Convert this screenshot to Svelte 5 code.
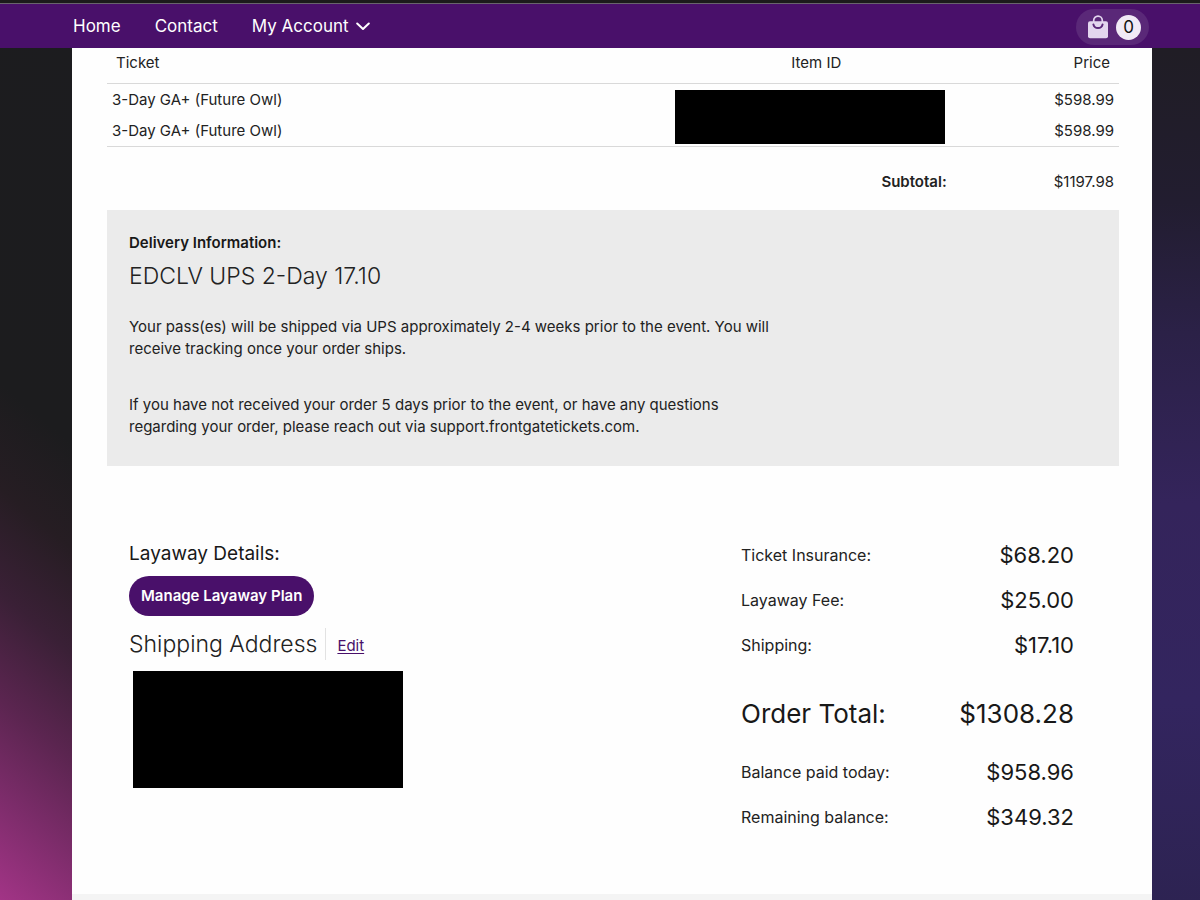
<script>
  const tickets = [
    { name: '3-Day GA+ (Future Owl)', price: '$598.99' },
    { name: '3-Day GA+ (Future Owl)', price: '$598.99' }
  ];
  const fees = [
    { label: 'Ticket Insurance:', value: '$68.20' },
    { label: 'Layaway Fee:', value: '$25.00' },
    { label: 'Shipping:', value: '$17.10' },
    { label: 'Order Total:', value: '$1308.28', total: true },
    { label: 'Balance paid today:', value: '$958.96' },
    { label: 'Remaining balance:', value: '$349.32' }
  ];
</script>

<div class="page">
  <header>
    <nav>
      <a href="#home">Home</a>
      <a href="#contact">Contact</a>
      <button class="account" type="button">
        My Account
        <svg width="14" height="10" viewBox="0 0 14 10" fill="none" stroke="currentColor" stroke-width="2" stroke-linecap="round" stroke-linejoin="round" aria-hidden="true"><path d="M1.200 2.500L7 8l5.800-5.500" /></svg>
      </button>
    </nav>
    <button class="cart" type="button" aria-label="Cart">
      <svg width="20" height="24" viewBox="0 0 20 24" aria-hidden="true">
        <path d="M5.700 7V5.500a4.300 4.300 0 0 1 8.600 0V7" fill="none" stroke="#e3d6ee" stroke-width="1.700" />
        <rect x="0" y="6.200" width="20" height="17" rx="2" fill="#e3d6ee" />
        <path d="M5.400 9.400c.5 2.400 2.200 3.700 4.600 3.700s4.100-1.300 4.600-3.700" fill="none" stroke="#5a2878" stroke-width="2" stroke-linecap="round" />
      </svg>
      <span class="count">0</span>
    </button>
  </header>

  <main>
    <table>
      <colgroup><col class="c-name" /><col class="c-id" /><col /></colgroup>
      <thead>
        <tr><th class="name">Ticket</th><th class="id">Item ID</th><th class="price">Price</th></tr>
      </thead>
      <tbody>
        {#each tickets as ticket, i}
          <tr>
            <td class="name">{ticket.name}</td>
            {#if i === 0}
              <td class="id" rowspan={tickets.length}><div class="redacted ids"></div></td>
            {/if}
            <td class="price">{ticket.price}</td>
          </tr>
        {/each}
      </tbody>
      <tfoot>
        <tr><th class="subtotal" colspan="2">Subtotal:</th><td class="price">$1197.98</td></tr>
      </tfoot>
    </table>

    <section class="delivery">
      <h2>Delivery Information:</h2>
      <h3 class="light">EDCLV UPS 2-Day 17.10</h3>
      <p>Your pass(es) will be shipped via UPS approximately 2-4 weeks prior to the event. You will<br />receive tracking once your order ships.</p>
      <p>If you have not received your order 5 days prior to the event, or have any questions<br />regarding your order, please reach out via support.frontgatetickets.com.</p>
    </section>

    <section class="details">
      <div class="left">
        <h2>Layaway Details:</h2>
        <button class="manage" type="button">Manage Layaway Plan</button>
        <div class="address-head">
          <h3 class="light">Shipping Address</h3>
          <a href="#edit">Edit</a>
        </div>
        <div class="redacted address"></div>
      </div>
      <dl>
        {#each fees as fee}
          <div class="fee" class:total={fee.total}><dt>{fee.label}</dt><dd>{fee.value}</dd></div>
        {/each}
      </dl>
    </section>
    <footer></footer>
  </main>
</div>

<style>
  :global(body) {
    margin: 0;
    background: #1c1c1f;
  }
  .page {
    font: 15px/22px Inter, sans-serif;
    color: #222;
    min-height: 100vh;
    box-sizing: border-box;
    display: flex;
    flex-direction: column;
    border-top: 3px solid #1b1b1b;
    background:
      linear-gradient(to bottom, #201d25 48px, #221d30 200px, #2b2147 330px, #34245b 500px, #33255f 700px, #2d2352 900px) right / 50% 100% no-repeat,
      linear-gradient(220deg, #1c1c1f 0, #1c1c1e 46%, #261d23 57%, #3a2036 68%, #5b2550 79%, #7c2c6a 89%, #a23486 100%) left / 6% 100% no-repeat,
      #1c1c1f;
  }
  h2, h3, p, dl, dd { margin: 0; }
  button {
    font: inherit;
    color: inherit;
    border: 0;
    padding: 0;
    background: none;
    cursor: pointer;
  }
  header {
    display: flex;
    align-items: center;
    justify-content: space-between;
    height: 44px;
    padding: 0 51px 0 73px;
    background: #49106a;
    border-top: 1px solid #68646c;
    color: #fff;
    font-size: 17px;
  }
  nav { display: flex; gap: 34px; }
  nav a { color: inherit; text-decoration: none; }
  .account { display: flex; align-items: center; gap: 7px; }
  .cart {
    display: flex;
    align-items: center;
    gap: 8px;
    height: 36px;
    margin-top: 2px;
    padding: 0 8px 0 12px;
    border-radius: 18px;
    background: #5a2878;
  }
  .count {
    width: 25px;
    height: 25px;
    border-radius: 50%;
    background: #f1eaf6;
    color: #111;
    font-size: 17px;
    line-height: 25px;
    text-align: center;
  }
  main {
    flex: 1;
    display: flex;
    flex-direction: column;
    margin: 0 4% 0 6%;
    padding: 0 33px 0 35px;
    background: #fefefe;
  }
  table {
    width: 100%;
    table-layout: fixed;
    border-collapse: collapse;
  }
  .c-name { width: 50%; }
  .c-id { width: 39%; }
  th { font-weight: 400; }
  th, td { padding: 0 5px; height: 31px; }
  thead th { height: 35px; padding: 0 9px; vertical-align: top; line-height: 30px; }
  thead .id { padding: 0 0 0 12px; }
  tbody, tfoot { border-top: 1px solid #d9d9d9; }
  tfoot th, tfoot td { height: 63px; padding-top: 8px; box-sizing: border-box; }
  .name { text-align: left; }
  .id { text-align: center; }
  .price { text-align: right; }
  tfoot .subtotal { text-align: right; font-weight: 600; padding-right: 61px; }
  .redacted { background: #000; }
  .ids { width: 270px; height: 54px; margin: 4px auto 0; }
  .delivery {
    padding: 22px 22px 28px;
    background: #ebebeb;
  }
  .delivery h2 { font-size: 15px; font-weight: 600; color: #181818; }
  .light {
    font-size: 23px;
    line-height: 32px;
    font-weight: 300;
  }
  .delivery .light { margin-top: 6px; }
  .delivery p { margin-top: 34px; }
  .delivery .light + p { margin-top: 24px; }
  .details {
    display: flex;
    justify-content: space-between;
    padding: 76px 45px 54px 22px;
  }
  .left h2 {
    font-size: 19px;
    font-weight: 400;
    line-height: 24px;
    color: #181818;
  }
  .manage {
    height: 40px;
    margin-top: 10px;
    padding: 0 12px;
    border-radius: 20px;
    background: #49106a;
    color: #fff;
    font-weight: 600;
  }
  .address-head {
    display: flex;
    align-items: center;
    margin-top: 12px;
  }
  .address-head a {
    margin-left: 8px;
    padding: 7px 0 3px 11px;
    border-left: 1px solid #e2e2e2;
    color: #49106a;
    text-underline-offset: 2px;
  }
  .address {
    width: 270px;
    height: 117px;
    margin: 11px 0 0 4px;
  }
  dl { width: 333px; }
  .fee {
    display: flex;
    align-items: center;
    justify-content: space-between;
    height: 45px;
    font-size: 16px;
  }
  .fee:first-child { margin-top: -9px; }
  .fee dd { font-size: 22px; color: #181818; }
  .total { height: 48px; margin: 22px 0 12px; }
  .total dt, .total dd { font-size: 26px; color: #181818; }
  footer {
    height: 6px;
    margin: auto -33px 0 -35px;
    background: #f4f4f4;
  }
</style>
